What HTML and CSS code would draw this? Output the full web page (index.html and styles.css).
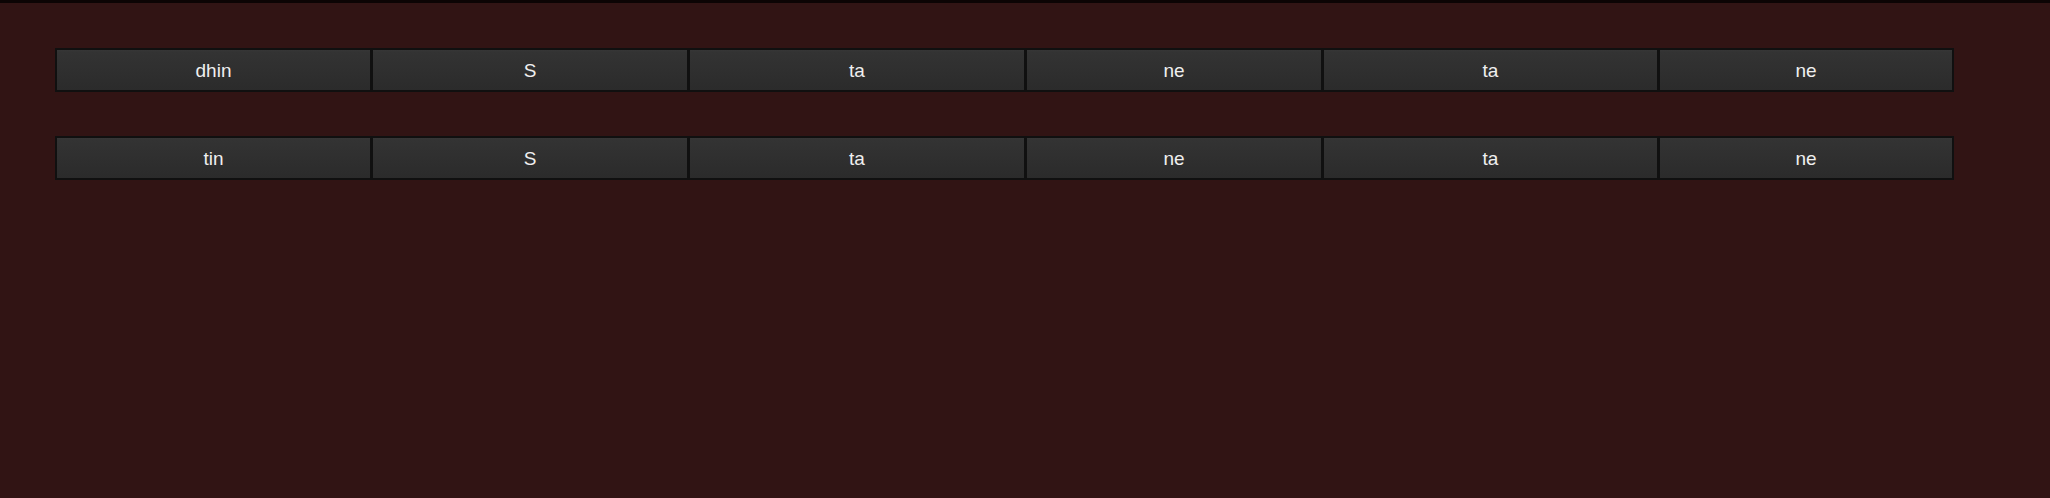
FILE: index.html
```html
<!DOCTYPE html>
<html>
<head>
<meta charset="utf-8">
<link rel="stylesheet" href="styles.css">
</head>
<body>
<div class="page">
  <div class="row">
    <div class="cell">dhin</div>
    <div class="cell">S</div>
    <div class="cell">ta</div>
    <div class="cell">ne</div>
    <div class="cell">ta</div>
    <div class="cell">ne</div>
  </div>
  <div class="row">
    <div class="cell">tin</div>
    <div class="cell">S</div>
    <div class="cell">ta</div>
    <div class="cell">ne</div>
    <div class="cell">ta</div>
    <div class="cell">ne</div>
  </div>
</div>
</body>
</html>
```
FILE: styles.css
```css
html, body {
  margin: 0;
  padding: 0;
  background: #311414;
  height: 100%;
}
body {
  border-top: 3px solid #0c0404;
  box-sizing: border-box;
  font-family: "Liberation Sans", Arial, sans-serif;
}
.page {
  padding: 45px 0 0 55px;
  display: flex;
  flex-direction: column;
  gap: 44px;
}
.row {
  display: grid;
  grid-template-columns: 316px 317px 337px 297px 336px 295px;
  height: 44px;
}
.cell {
  box-sizing: border-box;
  border: 2px solid #101010;
  margin-right: -1px;
  background: linear-gradient(#363636 0, #333 2px, #2b2b2b 100%);
  color: #efefef;
  font-size: 19px;
  display: flex;
  align-items: center;
  justify-content: center;
  padding-top: 1px;
}
```
